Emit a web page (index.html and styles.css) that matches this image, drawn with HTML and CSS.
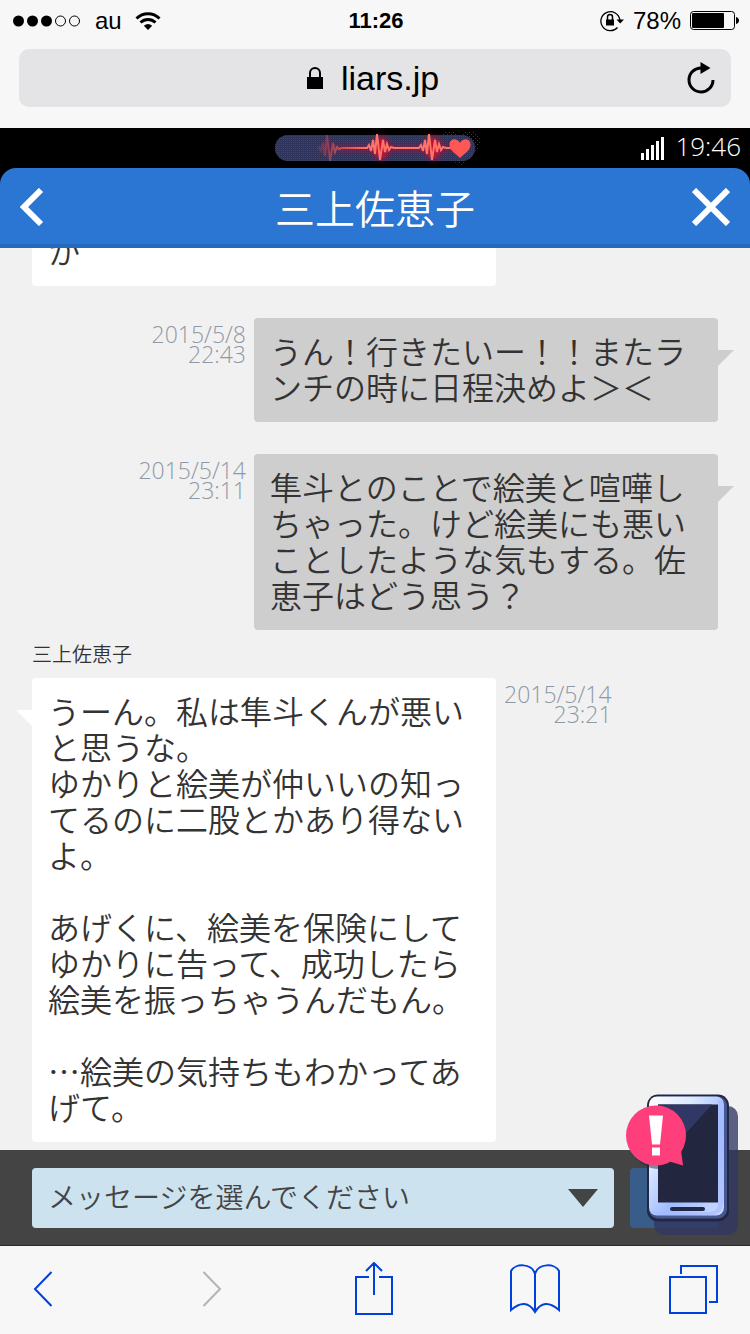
FILE: index.html
```html
<!DOCTYPE html>
<html lang="ja">
<head>
    <meta charset="UTF-8">
    <meta name="viewport" content="width=device-width, initial-scale=1.0">
    <title>三上佐恵子</title>
    <link rel="stylesheet" href="styles.css">
</head>
<body>
    <!-- Browser status + address bar -->
    <header class="browser-top">
        <div class="status-bar">
            <div class="status-left">
                <svg class="signal" width="68" height="12" viewBox="0 0 68 12" aria-hidden="true">
                    <circle cx="5.5" cy="6" r="5.5"/>
                    <circle cx="19.5" cy="6" r="5.5"/>
                    <circle cx="33.5" cy="6" r="5.5"/>
                    <circle cx="47.5" cy="6" r="5" fill="none" stroke="#000"/>
                    <circle cx="61.5" cy="6" r="5" fill="none" stroke="#000"/>
                </svg>
                <span class="carrier">au</span>
                <svg width="26" height="18" viewBox="0 0 26 18" aria-hidden="true">
                    <g fill="none" stroke="#000" stroke-width="3">
                        <path d="M1.5 6.5C8 .1 18 .1 24.500 6.500"/>
                        <path d="M5.500 10.500C9.800 6.400 16.200 6.400 20.500 10.500"/>
                    </g>
                    <path d="M8.800 13.700Q13 10.400 17.200 13.700L13 18Z"/>
                </svg>
            </div>
            <span class="clock">11:26</span>
            <div class="status-right">
                <svg width="24" height="22" viewBox="0 0 24 22" aria-hidden="true">
                    <path d="M17.500 17.500A9.500 9.500 0 1 1 19.800 10" fill="none" stroke="#000" stroke-width="1.300"/>
                    <path d="M16.500 9.500H24L20.200 13.500Z"/>
                    <rect x="6" y="9.500" width="8" height="6"/>
                    <path d="M7.500 10V7a2.500 2.500 0 0 1 5 0V10" fill="none" stroke="#000" stroke-width="1.500"/>
                </svg>
                <span class="percent">78%</span>
                <svg width="49" height="19" viewBox="0 0 49 19" aria-hidden="true">
                    <rect x=".5" y=".5" width="44" height="18" rx="3" fill="none" stroke="#000"/>
                    <rect x="2" y="2" width="32" height="15" rx="1"/>
                    <path d="M46 6q3 1 3 3.500t-3 3.500z"/>
                </svg>
            </div>
        </div>
        <div class="url-bar">
            <span class="url">
                <svg width="16" height="22" viewBox="0 0 16 22" aria-hidden="true">
                    <rect y="10" width="16" height="12"/>
                    <path d="M3 11V6a5 5 0 0 1 10 0v5" fill="none" stroke="#000" stroke-width="2"/>
                </svg>
                liars.jp
            </span>
            <button class="icon-btn reload" type="button" aria-label="再読み込み">
                <svg width="28" height="32" viewBox="0 0 28 32" aria-hidden="true">
                    <path d="M14.500 6A12 12 0 1 0 26 18" fill="none" stroke="#000" stroke-width="3"/>
                    <path d="M13.500 0V12L23.500 6Z"/>
                </svg>
            </button>
        </div>
    </header>

    <!-- In-game phone -->
    <div class="game-status">
        <svg class="heartbeat" width="220" height="40" viewBox="0 0 220 40" aria-hidden="true">
            <defs>
                <linearGradient id="pulse" x1="0" x2="1">
                    <stop offset="0" stop-color="#e0605a" stop-opacity=".1"/>
                    <stop offset=".15" stop-color="#f0655c" stop-opacity=".6"/>
                    <stop offset=".35" stop-color="#ff7468"/>
                </linearGradient>
                <pattern id="dither" width="2" height="2" patternUnits="userSpaceOnUse">
                    <rect width="1" height="1" fill="#45436b"/>
                    <rect x="1" y="1" width="1" height="1" fill="#22405c"/>
                </pattern>
                <pattern id="specks" width="4" height="4" patternUnits="userSpaceOnUse">
                    <rect width="1" height="1" fill="#8d1b2e"/>
                    <rect x="2" y="2" width="1" height="1" fill="#54301c"/>
                </pattern>
                <filter id="glow" x="-20%" y="-50%" width="140%" height="200%"><feGaussianBlur stdDeviation="3"/></filter>
            </defs>
            <path d="M195 38C168 20 174 3 185 3c6 0 9 3 10 7 1-4 4-7 11-7 12 0 17 17-11 35z" fill="url(#specks)"/>
            <rect x="10" y="7" width="200" height="26" rx="13" fill="#2c3259"/>
            <rect x="10" y="7" width="200" height="26" rx="13" fill="url(#dither)"/>
            <g fill="#d01030" filter="url(#glow)">
                <ellipse cx="63" cy="20" rx="6" ry="8" opacity=".3"/>
                <ellipse cx="116" cy="20" rx="8" ry="11"/>
                <ellipse cx="168" cy="20" rx="8" ry="11"/>
                <rect x="72" y="19" width="115" height="3"/>
            </g>
            <path d="M52 21l2-2 2 4 2-8 2 13 2-21 3 26 3-18 2 9 2-5 2 2 3-1h25l2-3 2 6 2-11 2 14 2-20 3 26 3-20 2 12 2-8 2 6 2-3 3 1h25l2-3 2 6 2-11 2 14 2-20 3 26 3-20 2 12 2-8 2 6 2-3 3 1h10" fill="none" stroke="url(#pulse)" stroke-width="2"/>
            <path d="M195 30C190 25 184 22 184.500 16c.5-6 8-6 10.500-1 2.500-5 10-5 10.500 1C206 22 200 25 195 30z" fill="#ff5656"/>
        </svg>
        <div class="game-clock">
            <svg width="24" height="23" viewBox="0 0 24 23" fill="#fff" aria-hidden="true">
                <rect y="16" width="3" height="7"/>
                <rect x="5" y="12" width="3" height="11"/>
                <rect x="10" y="8" width="3" height="15"/>
                <rect x="15" y="4" width="3" height="19"/>
                <rect x="20" width="3" height="23"/>
            </svg>
            <span class="game-time">19:46</span>
        </div>
    </div>
    <div class="title-wrap">
        <div class="title-bar">
            <button class="icon-btn" type="button" aria-label="戻る">
                <svg width="24" height="38" viewBox="0 0 24 38" fill="none" stroke="#fff" stroke-width="6" aria-hidden="true"><path d="M21 2L4 19L21 36"/></svg>
            </button>
            <h1>三上佐恵子</h1>
            <button class="icon-btn" type="button" aria-label="閉じる">
                <svg width="38" height="38" viewBox="0 0 38 38" stroke="#fff" stroke-width="6" aria-hidden="true"><path d="M2 2L36 36M36 2L2 36"/></svg>
            </button>
        </div>
    </div>

    <main class="chat">
        <div class="message continued">
            <p class="bubble">か</p>
        </div>
        <div class="message mine">
            <p class="bubble">うん！行きたいー！！またランチの時に日程決めよ＞＜</p>
            <time class="date">2015/5/8<br>22:43</time>
        </div>
        <div class="message mine">
            <p class="bubble">隼斗とのことで絵美と喧嘩しちゃった。けど絵美にも悪いことしたような気もする。佐恵子はどう思う？</p>
            <time class="date">2015/5/14<br>23:11</time>
        </div>
        <p class="sender">三上佐恵子</p>
        <div class="message">
            <p class="bubble">うーん。私は隼斗くんが悪いと思うな。<br>ゆかりと絵美が仲いいの知ってるのに二股とかあり得ないよ。<br><br>あげくに、絵美を保険にしてゆかりに告って、成功したら絵美を振っちゃうんだもん。<br><br>…絵美の気持ちもわかってあげて。</p>
            <time class="date">2015/5/14<br>23:21</time>
        </div>
    </main>

    <form class="composer">
        <div class="select-wrap">
            <select class="message-select" aria-label="メッセージ">
                <option>メッセージを選んでください</option>
            </select>
            <svg class="arrow" width="30" height="18" viewBox="0 0 30 18" aria-hidden="true"><path d="M0 0H30L15 18Z" fill="#444"/></svg>
        </div>
        <button class="send" type="button" aria-label="送信"></button>
        <!-- Notification phone floats over the send button -->
        <button class="icon-btn phone-alert" type="button" aria-label="新着通知">
            <svg width="112" height="142" viewBox="0 0 112 142" aria-hidden="true">
                <defs>
                    <linearGradient id="frame" x1="0" y1="0" x2="1" y2="1">
                        <stop offset="0" stop-color="#fff"/>
                        <stop offset=".3" stop-color="#dce9ff"/>
                        <stop offset=".6" stop-color="#9fbcff"/>
                        <stop offset="1" stop-color="#d0dcff"/>
                    </linearGradient>
                </defs>
                <rect x="28" y="12" width="84" height="129" rx="10" fill="#313763" fill-opacity=".78"/>
                <rect x="21" y="0.500" width="82" height="127" rx="11" fill="#222844"/>
                <rect x="23" y="2.500" width="78" height="122" rx="9" fill="#46578f"/>
                <rect x="23" y="2.500" width="75" height="119" rx="8" fill="url(#frame)"/>
                <path d="M92 6h3q3 3 3 8v90q0 15-10 17H34q-8-1-10-5 4 2 12 2h47q9-1 9-8z" fill="#a4baff" fill-opacity=".65"/>
                <rect x="32" y="10.500" width="60" height="98" fill="#22273f"/>
                <path d="M32 10.500H86L62 37L32 65Z" fill="#323866"/>
                <rect x="44" y="113" width="35" height="4" rx="2" fill="#222844"/>
                <path d="M5 58q10 17 29 17l-3-5z" fill="#222844" fill-opacity=".5"/>
                <circle cx="30" cy="41.500" r="30" fill="#ff3f7c"/>
                <path d="M55 56L57 71.500L42 67Z" fill="#ff3f7c"/>
                <path d="M23 21.500H37L34 50.500H26ZM26 53.500H34V61.500H26Z" fill="#fff"/>
            </svg>
        </button>
    </form>

    <!-- Browser toolbar -->
    <nav class="toolbar">
        <button class="icon-btn" type="button" aria-label="前のページ">
            <svg width="20" height="36" viewBox="0 0 20 36" aria-hidden="true"><path d="M18.500 1L2 18L18.500 35"/></svg>
        </button>
        <button class="icon-btn disabled" type="button" aria-label="次のページ" disabled>
            <svg width="20" height="36" viewBox="0 0 20 36" aria-hidden="true"><path d="M1.500 1L18 18L1.500 35"/></svg>
        </button>
        <button class="icon-btn" type="button" aria-label="共有">
            <svg width="38" height="54" viewBox="0 0 38 54" aria-hidden="true"><path d="M14 15H1V52H37V15H24M19 33V1M11 9L19 1L27 9"/></svg>
        </button>
        <button class="icon-btn" type="button" aria-label="ブックマーク">
            <svg width="50" height="50" viewBox="0 0 50 50" aria-hidden="true"><path d="M25 48V10C22-1 5-1 1 7V46Q16 33 25 48Q34 33 49 46V7C45-1 28-1 25 10"/></svg>
        </button>
        <button class="icon-btn" type="button" aria-label="タブ">
            <svg width="50" height="50" viewBox="0 0 50 50" aria-hidden="true"><path d="M1 13H37V49H1ZM12 10V2H48V38H40"/></svg>
        </button>
    </nav>
</body>
</html>
```
FILE: styles.css
```css
* {
    box-sizing: border-box;
}
body {
    display: flex;
    flex-direction: column;
    height: 100vh;
    margin: 0;
    background-color: #f1f1f1;
    color: #333;
    font-family: "Noto Sans CJK JP", sans-serif;
    font-weight: 350;
    overflow: hidden;
}
svg {
    display: block;
}
h1, p {
    margin: 0;
}
.icon-btn {
    padding: 0;
    border: none;
    background: none;
    cursor: pointer;
}

/* browser top */
.browser-top {
    flex: none;
    padding-bottom: 21px;
    background-color: #f7f7f7;
    color: #000;
    font-family: "Liberation Sans", Arial, sans-serif;
    font-weight: 400;
}
.status-bar {
    display: grid;
    grid-template-columns: 1fr auto 1fr;
    align-items: center;
    height: 41px;
    padding: 0 11px 0 13px;
    margin-bottom: 8px;
    font-size: 24px;
}
.status-left, .status-right {
    display: flex;
    align-items: center;
}
.status-left {
    gap: 13px;
}
.signal {
    margin-right: 1px;
}
.status-right {
    justify-content: flex-end;
    gap: 9px;
}
.clock {
    font-size: 22px;
    font-weight: bold;
}
.url-bar {
    display: grid;
    grid-template-columns: 24px 1fr 28px;
    align-items: center;
    height: 58px;
    margin: 0 19px;
    padding: 0 16px;
    border-radius: 10px;
    background-color: #e4e4e6;
}
.url {
    grid-column: 2;
    display: flex;
    align-items: center;
    justify-content: center;
    gap: 18px;
    font-size: 34px;
    line-height: 40px;
}

/* game header */
.game-status {
    flex: none;
    display: grid;
    grid-template-columns: 1fr auto 1fr;
    align-items: center;
    height: 40px;
    padding: 0 9px;
    background-color: #000;
    color: #fff;
}
.heartbeat {
    grid-column: 2;
}
.game-clock {
    display: flex;
    align-items: center;
    justify-content: flex-end;
    gap: 10px;
}
.game-time {
    padding-bottom: 4px;
    font-family: "Open Sans", sans-serif;
    font-size: 26px;
    font-weight: 300;
    line-height: 32px;
}
.title-wrap {
    flex: none;
    background-color: #000;
}
.title-bar {
    display: grid;
    grid-template-columns: 38px 1fr 38px;
    align-items: center;
    height: 80px;
    padding: 2px 20px 0;
    border-bottom: 4px solid #266abf;
    border-radius: 16px 16px 0 0;
    background-color: #2a76d2;
    color: #fff;
}
.title-bar h1 {
    font-size: 40px;
    font-weight: 350;
    line-height: 56px;
    text-align: center;
}

/* chat, pinned to the newest message */
.chat {
    flex: 1;
    min-height: 0;
    display: flex;
    flex-direction: column;
    justify-content: flex-end;
    padding: 0 32px 8px;
    overflow: hidden;
}
.message {
    flex: none;
    display: flex;
    align-items: flex-start;
    gap: 8px;
}
.message.mine {
    flex-direction: row-reverse;
    margin-top: 32px;
}
.bubble {
    position: relative;
    width: 464px;
    padding: 14px 16px 18px;
    border-radius: 4px;
    background-color: #fff;
    font-size: 32px;
    line-height: 36px;
    line-break: anywhere;
}
.mine .bubble {
    background-color: #cecece;
}
.bubble::before {
    content: "";
    position: absolute;
    top: 32px;
    left: -16px;
    border-top: 16px solid #fff;
    border-left: 16px solid transparent;
}
.mine .bubble::before {
    left: auto;
    right: -16px;
    border-top-color: #cecece;
    border-left: none;
    border-right: 16px solid transparent;
}
.continued .bubble::before {
    content: none;
}
.date {
    padding-top: 6px;
    color: #8f98a6;
    font-family: "Open Sans", sans-serif;
    font-size: 23px;
    font-weight: 300;
    line-height: 20px;
    text-align: right;
}
.sender {
    flex: none;
    padding: 12px 0;
    font-size: 20px;
    line-height: 24px;
}

/* composer */
.composer {
    position: relative;
    flex: none;
    display: flex;
    gap: 16px;
    padding: 18px 32px 17px;
    border-bottom: 1px solid #2d2d2d;
    background-color: #444;
}
.select-wrap {
    position: relative;
    flex: 1;
}
.message-select {
    width: 100%;
    height: 60px;
    padding: 0 62px 4px 16px;
    border: none;
    border-radius: 4px;
    appearance: none;
    background-color: #cde2ef;
    color: #444;
    font-family: inherit;
    font-size: 28px;
    font-weight: 350;
}
.arrow {
    position: absolute;
    top: 21px;
    right: 16px;
    pointer-events: none;
}
.send {
    width: 88px;
    height: 60px;
    border: none;
    border-radius: 4px;
    background-color: #385d8b;
}
.phone-alert {
    position: absolute;
    right: 12px;
    bottom: 9px;
}

/* browser toolbar */
.toolbar {
    flex: none;
    display: grid;
    grid-template-columns: 169fr 153fr 155fr 159fr 50px;
    align-items: center;
    justify-items: start;
    height: 88px;
    padding: 0 31px 2px 33px;
    background-color: #f7f7f7;
}
.toolbar svg {
    fill: none;
    stroke: #0040dd;
    stroke-width: 2;
}
.toolbar .disabled svg {
    stroke: #b4b4b4;
}
```
